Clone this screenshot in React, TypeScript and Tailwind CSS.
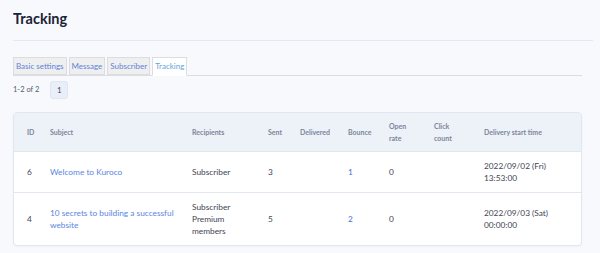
const tabs = ["Basic settings", "Message", "Subscriber", "Tracking"];

type Row = {
  id: number;
  subject: string[];
  recipients: string[];
  sent: string;
  bounce: string;
  open: string;
  time: string[];
};

const rows: Row[] = [
  {
    id: 6,
    subject: ["Welcome to Kuroco"],
    recipients: ["Subscriber"],
    sent: "3",
    bounce: "1",
    open: "0",
    time: ["2022/09/02 (Fri)", "13:53:00"],
  },
  {
    id: 4,
    subject: ["10 secrets to building a successful", "website"],
    recipients: ["Subscriber", "Premium", "members"],
    sent: "5",
    bounce: "2",
    open: "0",
    time: ["2022/09/03 (Sat)", "00:00:00"],
  },
];

export default function App() {
  return (
    <main
      className="h-[253px] w-[600px] overflow-hidden bg-[#f8f9fc] text-[#2d3344]"
      style={{ fontFamily: "Lato, 'Noto Sans', sans-serif" }}
    >
      <div className="pl-[13px] pr-[7px] pt-[9px]">
        <h1 className="text-[14.5px] font-bold leading-[20px] text-[#1b2337]">Tracking</h1>
        <div className="mt-[11px] h-px bg-[#e4eaf5]" />

        <div className="mt-[16px] mr-[11px] flex items-end gap-[2px] border-b border-[#dcdde0]">
          {tabs.map((t) => {
            const active = t === "Tracking";
            return (
              <div
                key={t}
                className={
                  active
                    ? "-mb-px h-[19px] border border-b-white border-[#dcdde0] bg-white px-[2px] text-[8px] leading-[17px] text-[#5fa3dc]"
                    : "h-[18px] border border-[#dcdde0] bg-[#efeff0] px-[2px] text-[8px] leading-[16px] text-[#5d83d8]"
                }
              >
                {t}
              </div>
            );
          })}
        </div>

        <div className="mt-[5px] flex items-center gap-[11px]">
          <span className="text-[7.5px] text-[#555c6b]">1-2 of 2</span>
          <span className="flex h-[18px] w-[18px] items-center justify-center rounded-[3px] border border-[#dfe6f0] bg-[#e9eff8] text-[8px] text-[#3d4456]">
            1
          </span>
        </div>

        <div className="mt-[13px] mr-[11px] overflow-hidden rounded-[4px] border border-[#e1e7f0] bg-white shadow-[0_1px_2px_rgba(30,40,70,0.04)]">
          <table className="w-full table-fixed border-collapse text-left">
            <thead>
              <tr className="bg-[#edf1f8] text-[7px] font-bold leading-[12px] text-[#7d869b]">
                <th className="w-[36px] py-[7px] pl-[13px] font-bold">ID</th>
                <th className="w-[142px] py-[7px] font-bold">Subject</th>
                <th className="w-[76px] py-[7px] font-bold">Recipients</th>
                <th className="w-[32px] py-[7px] font-bold">Sent</th>
                <th className="w-[48px] py-[7px] font-bold">Delivered</th>
                <th className="w-[41px] py-[7px] font-bold">Bounce</th>
                <th className="w-[45px] py-[7px] font-bold">
                  Open
                  <br />
                  rate
                </th>
                <th className="w-[50px] py-[7px] font-bold">
                  Click
                  <br />
                  count
                </th>
                <th className="py-[7px] font-bold">Delivery start time</th>
              </tr>
            </thead>
            <tbody className="text-[8.3px] leading-[12px] text-[#3f4454]">
              {rows.map((r) => (
                <tr key={r.id} className="border-t border-[#e1e7f0]">
                  <td className="py-[8px] pl-[13px]">{r.id}</td>
                  <td className="py-[8px] pr-[10px] text-[#5b86e0]">
                    {r.subject.map((s) => (
                      <div key={s}>{s}</div>
                    ))}
                  </td>
                  <td className="py-[8px]">
                    {r.recipients.map((s) => (
                      <div key={s}>{s}</div>
                    ))}
                  </td>
                  <td className="py-[8px]">{r.sent}</td>
                  <td className="py-[8px]" />
                  <td className="py-[8px] text-[#3b6fd6]">{r.bounce}</td>
                  <td className="py-[8px]">{r.open}</td>
                  <td className="py-[8px]" />
                  <td className="py-[8px]">
                    {r.time.map((s) => (
                      <div key={s}>{s}</div>
                    ))}
                  </td>
                </tr>
              ))}
            </tbody>
          </table>
        </div>
      </div>
    </main>
  );
}
